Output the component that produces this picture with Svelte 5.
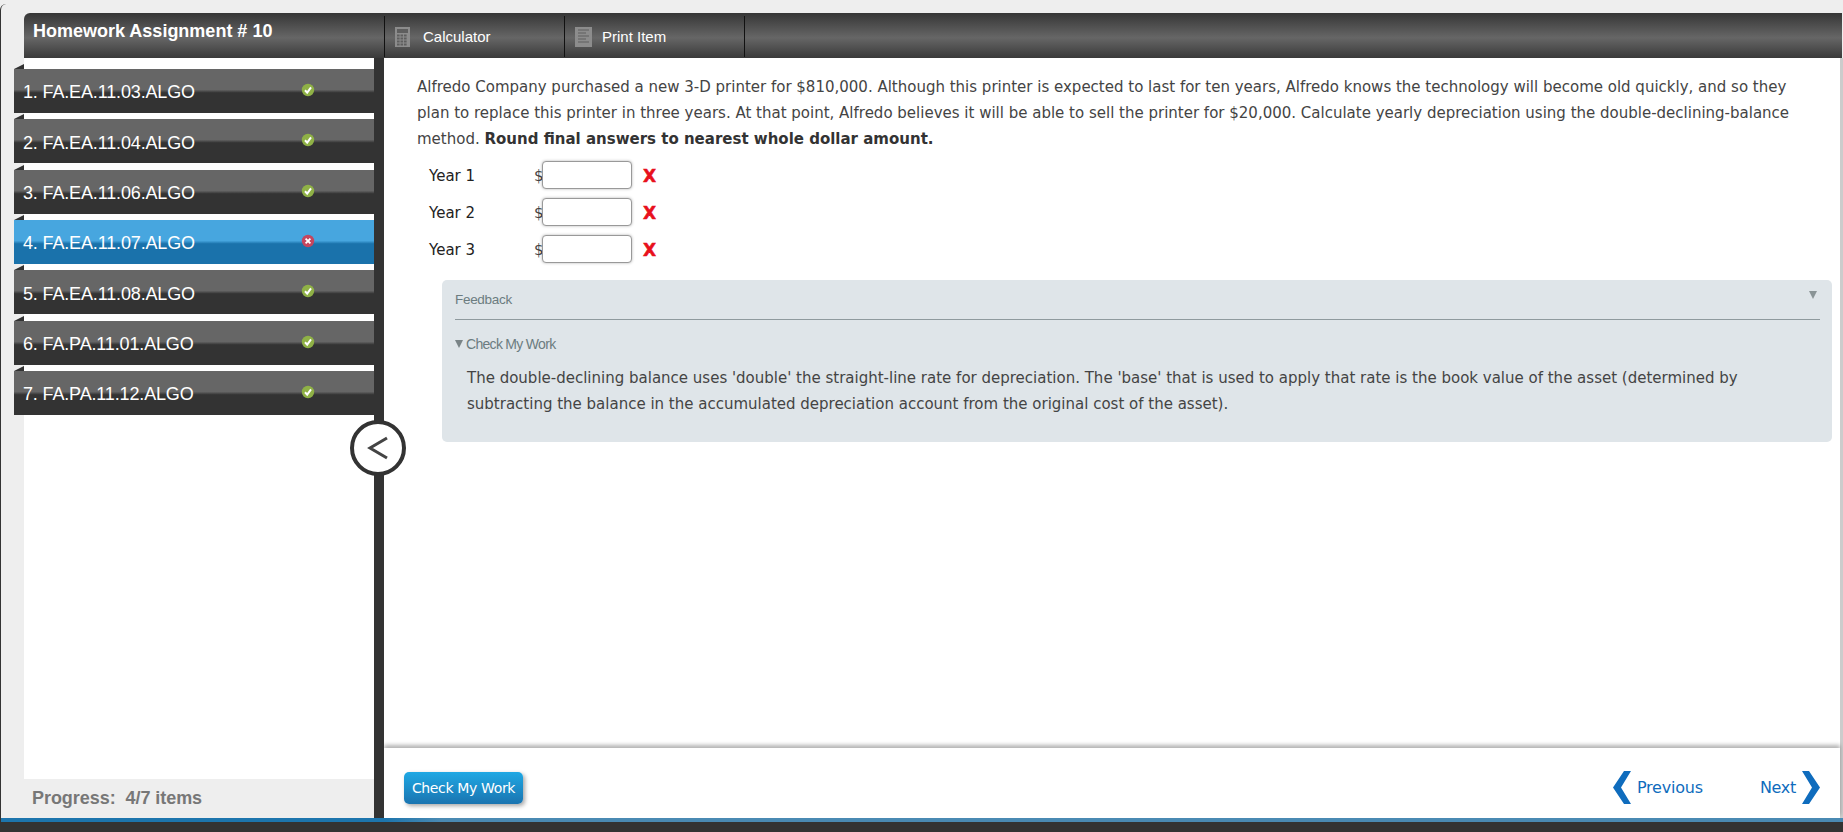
<script>
  const items = [
    { label: '1. FA.EA.11.03.ALGO', ok: true },
    { label: '2. FA.EA.11.04.ALGO', ok: true },
    { label: '3. FA.EA.11.06.ALGO', ok: true },
    { label: '4. FA.EA.11.07.ALGO', ok: false, active: true },
    { label: '5. FA.EA.11.08.ALGO', ok: true },
    { label: '6. FA.PA.11.01.ALGO', ok: true },
    { label: '7. FA.PA.11.12.ALGO', ok: true },
  ];
  const years = ['Year 1', 'Year 2', 'Year 3'];
</script>

<div class="frame">
  <header class="top">
    <div class="title">Homework Assignment # 10</div>
    <div class="tab">
      <svg class="tab-icon" width="15" height="20" viewBox="0 0 15 20">
        <rect width="15" height="20" fill="#8c8c8c" />
        <rect x="2" y="2" width="11" height="4" fill="#5e5e5e" />
        {#each [8, 11, 14, 17] as y}
          {#each [2, 5.5, 9] as x}
            <rect {x} y={y - 0.5} width="2.6" height="2" fill="#5e5e5e" />
          {/each}
        {/each}
      </svg>
      Calculator
    </div>
    <div class="tab print">
      <svg class="tab-icon" width="17" height="20" viewBox="0 0 17 20">
        <rect width="17" height="20" fill="#8c8c8c" />
        <path d="M3 3h11M3 6h8M3 9h11M3 12h8M3 15h11" stroke="#5e5e5e" stroke-width="1.2" />
      </svg>
      Print Item
    </div>
    <div class="tab-rest"></div>
  </header>

  <div class="main">
    <aside class="side">
      <ul class="items">
        {#each items as item}
          <li class="item" class:active={item.active}>
            <span class="item-label">{item.label}</span>
            <svg class="status" width="14" height="14" viewBox="0 0 14 14">
              {#if item.ok}
                <circle cx="7" cy="7" r="6.2" fill="#8fb146" />
                <path d="M4 7.2l2.2 2.4L10 4.4" fill="none" stroke="#fff" stroke-width="2" />
              {:else}
                <circle cx="7" cy="7" r="6.2" fill="#c4465f" />
                <path d="M4.6 4.6l4.8 4.8M9.4 4.6l-4.8 4.8" fill="none" stroke="#fff" stroke-width="1.8" />
              {/if}
            </svg>
          </li>
        {/each}
      </ul>
      <div class="progress">Progress:&nbsp; 4/7 items</div>
      <button class="collapse" aria-label="Collapse">
        <svg width="22" height="26" viewBox="0 0 22 26">
          <path d="M20 3L3 13l17 10" fill="none" stroke="#444" stroke-width="3" />
        </svg>
      </button>
    </aside>

    <section class="content">
      <div class="scroll">
        <p class="question">
          Alfredo Company purchased a new 3-D printer for $810,000. Although this printer is expected to last for ten years, Alfredo knows the technology will become old quickly, and so they plan to replace this printer in three years. At that point, Alfredo believes it will be able to sell the printer for $20,000. Calculate yearly depreciation using the double-declining-balance method. <b>Round final answers to nearest whole dollar amount.</b>
        </p>

        <div class="answers">
          {#each years as year}
            <div class="answer">
              <span class="year">{year}</span>
              <span class="dollar">$</span>
              <input type="text" />
              <span class="wrong">X</span>
            </div>
          {/each}
        </div>

        <div class="feedback">
          <div class="fb-head">
            <span>Feedback</span>
            <span class="fb-arrow"></span>
          </div>
          <div class="fb-sub"><span class="fb-sub-arrow"></span>Check My Work</div>
          <p class="fb-text">
            The double-declining balance uses 'double' the straight-line rate for depreciation. The 'base' that is used to apply that rate is the book value of the asset (determined by subtracting the balance in the accumulated depreciation account from the original cost of the asset).
          </p>
        </div>
      </div>

      <footer class="foot">
        <button class="check">Check My Work</button>
        <div class="nav">
          <svg width="19" height="33" viewBox="0 0 19 33"><path d="M11 0h7L8 16.5 18 33h-7L0 16.5z" fill="#0f6cbd" /></svg>
          <span class="prev">Previous</span>
          <span class="next">Next</span>
          <svg width="19" height="33" viewBox="0 0 19 33"><path d="M8 0H1l10 16.5L1 33h7l11-16.5z" fill="#0f6cbd" /></svg>
        </div>
      </footer>
    </section>
  </div>

  <div class="base"></div>
</div>

<style>
  :global(body) {
    margin: 0;
    background: #eee;
  }
  .frame {
    height: 828px;
    margin-top: 4px;
    box-sizing: border-box;
    display: flex;
    flex-direction: column;
    overflow: hidden;
    padding-top: 9px;
    background: #eee;
    border-left: 1px solid #333;
    border-top-left-radius: 6px;
    font-family: "DejaVu Sans", Verdana, sans-serif;
  }

  /* top bar */
  .top {
    height: 45px;
    flex: none;
    display: flex;
    margin: 0 1px 0 23px;
    border-top-left-radius: 6px;
    background: linear-gradient(#363636, #666 55%, #3a3a3a);
    font-family: "Liberation Sans", Arial, sans-serif;
    color: #fff;
  }
  .title {
    width: 360px;
    box-sizing: border-box;
    padding: 8px 0 0 9px;
    font-size: 18px;
    font-weight: bold;
  }
  .tab {
    width: 180px;
    box-sizing: border-box;
    display: flex;
    align-items: center;
    padding-left: 10px;
    margin-top: 3px;
    height: 41px;
    border-left: 1px solid #111;
    font-size: 15px;
  }
  .tab-icon {
    margin-right: 13px;
    flex: none;
  }
  .print .tab-icon {
    margin-right: 10px;
  }
  .tab-rest {
    flex: 1;
    margin-top: 3px;
    height: 41px;
    border-left: 1px solid #111;
  }

  /* sidebar */
  .main {
    flex: 1;
    display: flex;
    min-height: 0;
  }
  .side {
    position: relative;
    width: 350px;
    flex: none;
    margin-left: 23px;
    display: flex;
    flex-direction: column;
    background: #fff;
    border-right: 10px solid #333;
  }
  .items {
    flex: 1;
    list-style: none;
    margin: 0 0 0 -10px;
    padding: 11px 0 0;
  }
  .item {
    position: relative;
    height: 44px;
    margin-bottom: 6.33px;
    display: flex;
    align-items: center;
    background: linear-gradient(#666 47%, #333 54%);
    color: #fff;
    font-family: "Liberation Sans", Arial, sans-serif;
    font-size: 18px;
  }
  .item.active {
    background: linear-gradient(#47a6df 47%, #1a72ab 54%);
  }
  .item::before {
    content: "";
    position: absolute;
    left: 0;
    top: -5px;
    border-bottom: 5px solid #333;
    border-left: 10px solid transparent;
  }
  .item-label {
    width: 287px;
    padding: 3.5px 0 0 9px;
    box-sizing: border-box;
    letter-spacing: -0.15px;
  }
  .status {
    margin-top: -2px;
  }
  .progress {
    height: 39px;
    flex: none;
    box-sizing: border-box;
    padding: 9px 0 0 8px;
    background: #eee;
    color: #777;
    font-family: "Liberation Sans", Arial, sans-serif;
    font-size: 18px;
    font-weight: bold;
    letter-spacing: -0.05px;
  }
  .collapse {
    position: absolute;
    top: 362px;
    left: 326px;
    width: 56px;
    height: 56px;
    padding: 0;
    display: flex;
    align-items: center;
    justify-content: center;
    background: #fff;
    border: 4px solid #333;
    border-radius: 50%;
  }

  /* question */
  .content {
    flex: 1;
    min-width: 0;
    margin-right: 3px;
    display: flex;
    flex-direction: column;
    background: #fff;
    box-shadow: 3px 0 0 #ccc;
  }
  .scroll {
    flex: 1;
    padding: 0 8px 0 33px;
    color: #444;
    font-size: 15px;
    line-height: 26px;
  }
  .question {
    margin: 16px 10px 0 0;
  }
  .question b {
    color: #333;
  }
  .answers {
    margin: 5px 0 0 12px;
  }
  .answer {
    height: 37px;
    display: flex;
    align-items: center;
    color: #222;
  }
  .year {
    width: 105px;
  }
  .dollar {
    width: 8px;
    color: #444;
  }
  input {
    width: 90px;
    height: 28px;
    margin-top: -2px;
    box-sizing: border-box;
    padding: 0;
    background: #fff;
    border: 1px solid #999;
    border-radius: 4px;
    box-shadow: 0 0 3px rgba(0, 0, 0, 0.3);
  }
  .wrong {
    margin-left: 11px;
    color: #e8101c;
    font-size: 17px;
    font-weight: bold;
    -webkit-text-stroke: 0.5px #e8101c;
  }

  /* feedback */
  .feedback {
    margin: 12px 0 0 25px;
    height: 162px;
    box-sizing: border-box;
    padding: 0 12px 0 13px;
    background: #dfe5e9;
    border-radius: 5px;
  }
  .fb-head {
    height: 39px;
    display: flex;
    align-items: center;
    justify-content: space-between;
    border-bottom: 1px solid #8f9a9e;
    color: #6c7c80;
    font-family: "Liberation Sans", Arial, sans-serif;
    font-size: 13.5px;
    letter-spacing: -0.3px;
  }
  .fb-arrow {
    margin: -9px 3px 0 0;
    border-top: 8px solid #8a9496;
    border-left: 4.5px solid transparent;
    border-right: 4.5px solid transparent;
  }
  .fb-sub {
    margin-top: 15px;
    height: 18px;
    display: flex;
    align-items: center;
    color: #6c7c80;
    font-family: "Liberation Sans", Arial, sans-serif;
    font-size: 14px;
    letter-spacing: -0.7px;
  }
  .fb-sub-arrow {
    margin-right: 3px;
    border-top: 8px solid #7a8487;
    border-left: 4.5px solid transparent;
    border-right: 4.5px solid transparent;
  }
  .fb-text {
    margin: 12px 0 0 12px;
  }

  /* footer */
  .foot {
    height: 70px;
    box-sizing: border-box;
    flex: none;
    display: flex;
    align-items: center;
    justify-content: space-between;
    padding: 9px 20px 0 20px;
    background: #fff;
    box-shadow: 0 -3px 4px rgba(0, 0, 0, 0.3);
  }
  .check {
    width: 119px;
    height: 32px;
    padding: 0;
    color: #fff;
    background: linear-gradient(#1fa8e4, #1a74b0);
    border: 0;
    border-radius: 5px;
    box-shadow: 2px 2px 4px rgba(0, 0, 0, 0.35);
    font-family: "DejaVu Sans", Verdana, sans-serif;
    font-size: 14px;
    letter-spacing: -0.35px;
  }
  .nav {
    display: flex;
    align-items: center;
    color: #0f6cbd;
    font-size: 16px;
  }
  .prev {
    margin: 0 57px 0 5px;
    letter-spacing: -0.2px;
  }
  .next {
    margin-right: 5px;
    letter-spacing: -0.3px;
  }
  .base {
    height: 14px;
    flex: none;
    background: linear-gradient(90deg, #1d75ad 384px, #4a8ab3 440px) top / 100% 4px no-repeat, #333;
    position: relative;
  }
</style>
